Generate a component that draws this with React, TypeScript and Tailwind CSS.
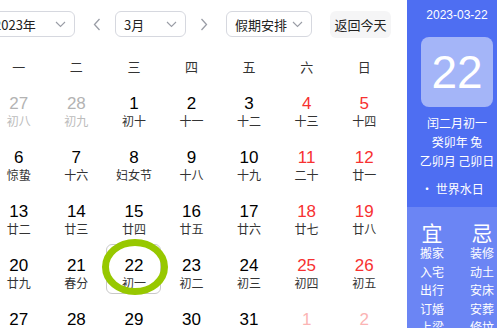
import { ReactNode } from 'react';

type Tone = 'normal' | 'weekend' | 'muted' | 'mutedWeekend';

interface Day {
  n: number;
  lunar: string;
  tone: Tone;
}

const WEEK = ['一', '二', '三', '四', '五', '六', '日'];

const ROWS: [number, string, Tone][][] = [
  [[27, '初八', 'muted'], [28, '初九', 'muted'], [1, '初十', 'normal'], [2, '十一', 'normal'], [3, '十二', 'normal'], [4, '十三', 'weekend'], [5, '十四', 'weekend']],
  [[6, '惊蛰', 'normal'], [7, '十六', 'normal'], [8, '妇女节', 'normal'], [9, '十八', 'normal'], [10, '十九', 'normal'], [11, '二十', 'weekend'], [12, '廿一', 'weekend']],
  [[13, '廿二', 'normal'], [14, '廿三', 'normal'], [15, '廿四', 'normal'], [16, '廿五', 'normal'], [17, '廿六', 'normal'], [18, '廿七', 'weekend'], [19, '廿八', 'weekend']],
  [[20, '廿九', 'normal'], [21, '春分', 'normal'], [22, '初一', 'normal'], [23, '初二', 'normal'], [24, '初三', 'normal'], [25, '初四', 'weekend'], [26, '初五', 'weekend']],
  [[27, '初六', 'normal'], [28, '初七', 'normal'], [29, '初八', 'normal'], [30, '初九', 'normal'], [31, '初十', 'normal'], [1, '十一', 'mutedWeekend'], [2, '十二', 'mutedWeekend']],
];

const YI = ['搬家', '入宅', '出行', '订婚', '上梁'];
const JI = ['装修', '动土', '安床', '安葬', '修坟'];

const CJK = "font-['Noto_Sans_CJK_SC',sans-serif]";

function Chevron({ dir }: { dir: 'down' | 'left' | 'right' }) {
  if (dir === 'down') {
    return (
      <svg width="11" height="7" viewBox="0 0 11 7" fill="none">
        <path d="M1 1l4.5 4.5L10 1" stroke="#9a9da6" strokeWidth="1.1" />
      </svg>
    );
  }
  return (
    <svg width="8" height="13" viewBox="0 0 8 13" fill="none">
      <path d={dir === 'left' ? 'M6.5 1L1.5 6.5l5 5.5' : 'M1.5 1l5 5.5-5 5.5'} stroke="#9a9da6" strokeWidth="1.3" />
    </svg>
  );
}

function Select({ label, className }: { label: string; className: string }) {
  return (
    <div className={`h-[26px] flex items-center justify-between rounded-[6px] border border-[#d6d8df] bg-white pl-[8px] pr-[8px] ${className}`}>
      <span className={`${CJK} text-[13px] leading-none text-[#222]`}>{label}</span>
      <Chevron dir="down" />
    </div>
  );
}

function numColor(t: Tone) {
  if (t === 'weekend') return 'text-[#f73131]';
  if (t === 'muted') return 'text-[#b3b3b3]';
  if (t === 'mutedWeekend') return 'text-[#fbb4b4]';
  return 'text-[#000]';
}

function lunarColor(t: Tone) {
  if (t === 'muted') return 'text-[#bcbcbc]';
  if (t === 'mutedWeekend') return 'text-[#fbc4c4]';
  return 'text-[#333]';
}

function Cell({ d, selected }: { d: Day; selected: boolean }) {
  return (
    <div className="h-[54px] flex justify-center">
      <div
        className={`relative w-[55px] h-[50px] pt-[10px] flex flex-col items-center rounded-[6px] border ${
          selected ? 'border-[#c9c9c9]' : 'border-transparent'
        }`}
      >
        <span className={`font-['Liberation_Sans',Arial,sans-serif] text-[17px] leading-[22px] ${numColor(d.tone)}`}>{d.n}</span>
        <span className={`${CJK} text-[12px] leading-[12px] ${lunarColor(d.tone)}`}>{d.lunar}</span>
        {selected && (
          <svg className="absolute left-[-6px] top-[-7px] pointer-events-none" width="68" height="58" viewBox="0 0 68 58" fill="none">
            <ellipse cx="34" cy="29" rx="29.5" ry="24.5" stroke="#97c800" strokeWidth="7" />
          </svg>
        )}
      </div>
    </div>
  );
}

function Panel({ children }: { children: ReactNode }) {
  return <div className="w-[100px] h-[328px] shrink-0 flex flex-col overflow-hidden text-white">{children}</div>;
}

export default function App() {
  return (
    <div className="w-[497px] h-[328px] overflow-hidden bg-white">
      <div className="ml-[-10px] w-[517px] h-[328px] flex gap-[14px]">
        {/* Calendar */}
        <div className="w-[403px] shrink-0">
          <div className="h-[52px] pt-[11px] flex items-start">
            <Select label="2023年" className="ml-[-5px] w-[90px]" />
            <div className="ml-[14px] w-[16px] h-[26px] flex items-center justify-center">
              <Chevron dir="left" />
            </div>
            <Select label="3月" className="ml-[10px] w-[71px]" />
            <div className="ml-[10px] w-[16px] h-[26px] flex items-center justify-center">
              <Chevron dir="right" />
            </div>
            <Select label="假期安排" className="ml-[14px] w-[86px]" />
            <div className={`ml-[18px] w-[61px] h-[27px] rounded-[6px] bg-[#f5f5f6] flex items-center justify-center ${CJK} text-[13px] text-[#222]`}>
              返回今天
            </div>
          </div>

          <div className="grid grid-cols-7 h-[30px] items-center">
            {WEEK.map((w) => (
              <div key={w} className={`text-center ${CJK} text-[13px] text-[#333]`}>{w}</div>
            ))}
          </div>

          <div className="grid grid-cols-7">
            {ROWS.flatMap((row, ri) =>
              row.map(([n, lunar, tone], ci) => (
                <Cell key={`${ri}-${ci}`} d={{ n, lunar, tone }} selected={ri === 3 && ci === 2} />
              ))
            )}
          </div>
        </div>

        {/* Side panel */}
        <Panel>
          <div className="h-[207px] shrink-0 bg-[#4e6ef2] flex flex-col items-center pt-[6px]">
            <div className="font-['Liberation_Sans',Arial,sans-serif] text-[12px] leading-[18px]">2023-03-22</div>
            <div className="mt-[13px] w-[72px] h-[70px] rounded-[8px] bg-[#a4b5f8] flex items-center justify-center font-['Liberation_Sans',Arial,sans-serif] text-[46px] leading-none">
              22
            </div>
            <div className={`mt-[6px] ${CJK} text-[12px] leading-[19px] text-center`}>
              <div>闰二月初一</div>
              <div>癸卯年 兔</div>
              <div>乙卯月 己卯日</div>
            </div>
            <div className={`self-stretch pl-[14px] mt-[10px] ${CJK} text-[12px] leading-[18px]`}>• 世界水日</div>
          </div>
          <div className="shrink-0 bg-[#6b85f4] grid grid-cols-2 pt-[13px] pb-[10px]">
            {[['宜', YI], ['忌', JI]].map(([head, items]) => (
              <div key={head as string} className={`flex flex-col items-center ${CJK}`}>
                <div className="text-[21px] leading-[24px]">{head as string}</div>
                {(items as string[]).map((it) => (
                  <div key={it} className="text-[12px] leading-[18.5px]">{it}</div>
                ))}
              </div>
            ))}
          </div>
        </Panel>
      </div>
    </div>
  );
}
